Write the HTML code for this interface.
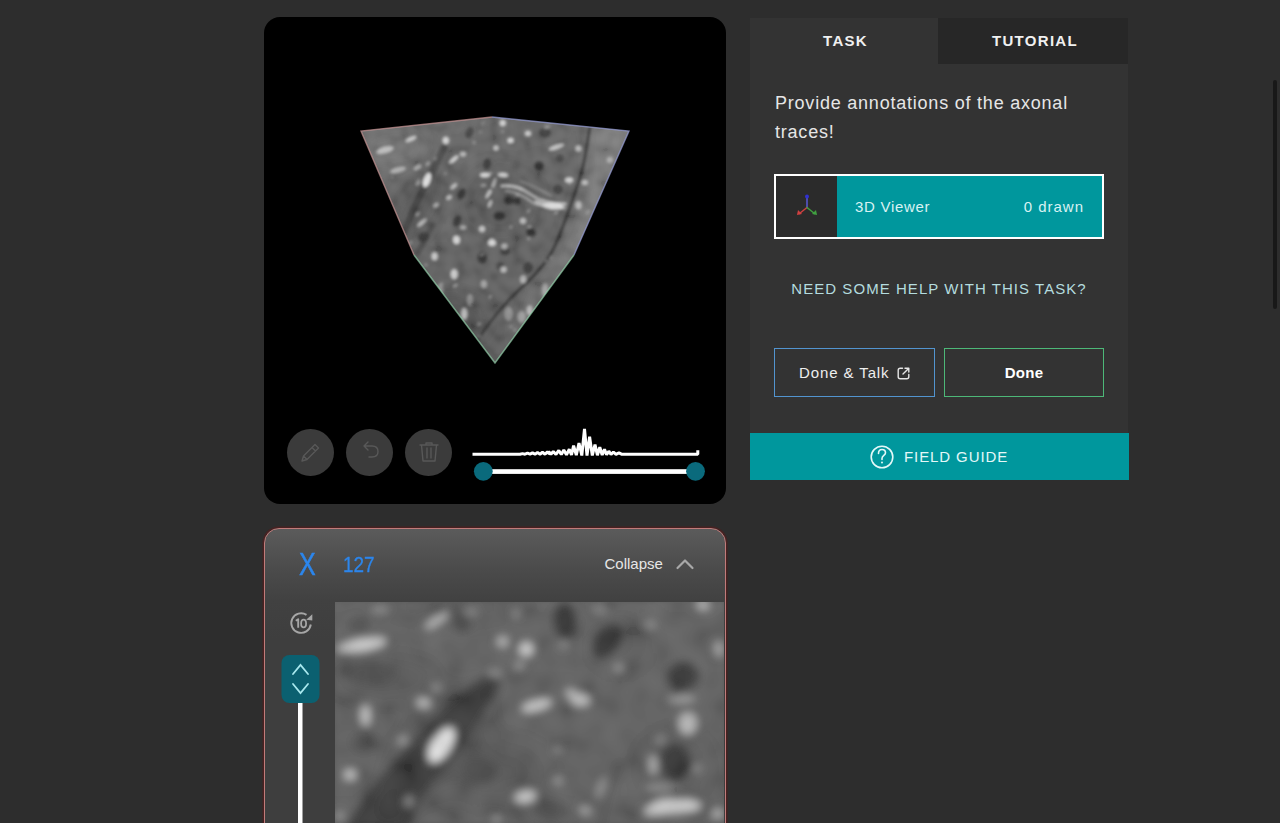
<!DOCTYPE html>
<html><head><meta charset="utf-8">
<style>
*{box-sizing:border-box;margin:0;padding:0}
html,body{width:1280px;height:823px;overflow:hidden;background:#2d2d2d;font-family:"Liberation Sans",sans-serif}
.abs{position:absolute}
#viewer{left:264px;top:17px;width:462px;height:487px;background:#000;border-radius:16px;overflow:hidden}
.tbtn{width:47px;height:47px;border-radius:50%;background:#3b3b3b;top:412px}
#panel{left:750px;top:18px;width:378px;height:415px;background:#333}
.tab{top:0;height:46px;color:#f0f0f0;font-weight:bold;font-size:15px;letter-spacing:1.3px;text-align:center;line-height:46px}
#fg{left:750px;top:433px;width:379px;height:47px;background:#00979d;color:#e4f8f8}
#slice{left:263.5px;top:527.5px;width:462.5px;height:330px;border:1.6px solid #c07c7b;box-shadow:0 0 0 1.5px rgba(75,32,32,.9);border-radius:15px;background:linear-gradient(#5b5b5b,#4b4b4b 40px,#414141 72px,#3e3e3e 110px,#3e3e3e);overflow:hidden}
svg{position:absolute;display:block}
</style></head><body>
<div id="viewer" class="abs">
  <div class="abs tbtn" style="left:23px"></div>
  <div class="abs tbtn" style="left:82px"></div>
  <div class="abs tbtn" style="left:141px"></div>
</div>
<svg style="left:264px;top:17px" width="462" height="487" viewBox="264 17 462 487">
  <defs>
    <clipPath id="cc"><polygon points="361,131 492,117 629,131 574,255 495,363 414,255"/></clipPath>
    <filter id="cb" x="-10%" y="-10%" width="120%" height="120%"><feGaussianBlur stdDeviation="1.6"/></filter>
    <filter id="cbb" x="-30%" y="-30%" width="160%" height="160%"><feGaussianBlur stdDeviation="8"/></filter>
    <filter id="cnz" x="0" y="0" width="100%" height="100%"><feTurbulence type="fractalNoise" baseFrequency="0.09" numOctaves="1" seed="3"/><feColorMatrix type="matrix" values="2 0 0 0 -0.5  2 0 0 0 -0.5  2 0 0 0 -0.5  0 0 0 0 0.1"/><feGaussianBlur stdDeviation="1"/></filter>
    <linearGradient id="cg" x1="0" y1="0" x2="0.3" y2="1">
      <stop offset="0" stop-color="#6a6a6a"/><stop offset="0.45" stop-color="#5e5e5e"/><stop offset="1" stop-color="#5a5a5a"/>
    </linearGradient>
  </defs>
  <g clip-path="url(#cc)">
   <g filter="url(#cb)">
    <rect x="340" y="100" width="310" height="280" fill="url(#cg)"/>
    <g filter="url(#cbb)">
      <polygon points="592,120 640,120 590,260 560,255 585,190" fill="#9a9a9a" fill-opacity="0.45"/>
      <path d="M525,295 L562,248 L585,250 L515,350 Z" fill="#909090" fill-opacity="0.35"/>
      <ellipse cx="420" cy="200" rx="14" ry="40" fill="#2a2a2a" fill-opacity="0.35" transform="rotate(28 420 200)"/>
      <ellipse cx="450" cy="320" rx="40" ry="25" fill="#2a2a2a" fill-opacity="0.3"/>
      <ellipse cx="500" cy="200" rx="35" ry="35" fill="#3a3a3a" fill-opacity="0.2"/>
      <ellipse cx="395" cy="150" rx="30" ry="14" fill="#a0a0a0" fill-opacity="0.25"/>
    </g>
    <ellipse cx="539.0" cy="166.0" rx="5.0" ry="5.0" fill="#222222" fill-opacity="0.90"/>
<ellipse cx="509.0" cy="200.5" rx="5.0" ry="4.5" fill="#222222" fill-opacity="0.90"/>
<ellipse cx="517.0" cy="201.0" rx="4.0" ry="4.0" fill="#222222" fill-opacity="0.80"/>
<ellipse cx="499.5" cy="216.0" rx="6.0" ry="4.5" fill="#222222" fill-opacity="0.90"/>
<ellipse cx="461.6" cy="194.0" rx="4.0" ry="6.0" fill="#222222" fill-opacity="0.80" transform="rotate(25 461.6 194.0)"/>
<ellipse cx="457.0" cy="221.0" rx="4.0" ry="6.0" fill="#222222" fill-opacity="0.75" transform="rotate(25 457.0 221.0)"/>
<ellipse cx="531.0" cy="232.0" rx="5.0" ry="4.0" fill="#222222" fill-opacity="0.75" transform="rotate(20 531.0 232.0)"/>
<ellipse cx="487.0" cy="164.0" rx="4.0" ry="6.0" fill="#222222" fill-opacity="0.70" transform="rotate(10 487.0 164.0)"/>
<ellipse cx="469.5" cy="132.6" rx="4.0" ry="6.0" fill="#222222" fill-opacity="0.60" transform="rotate(20 469.5 132.6)"/>
<ellipse cx="545.0" cy="132.6" rx="6.0" ry="5.0" fill="#222222" fill-opacity="0.60"/>
<ellipse cx="558.0" cy="189.5" rx="5.0" ry="5.0" fill="#222222" fill-opacity="0.60"/>
<ellipse cx="423.7" cy="237.0" rx="6.0" ry="5.0" fill="#222222" fill-opacity="0.70" transform="rotate(-30 423.7 237.0)"/>
<ellipse cx="482.2" cy="257.9" rx="5.0" ry="6.0" fill="#222222" fill-opacity="0.70"/>
<ellipse cx="505.2" cy="251.3" rx="5.0" ry="4.0" fill="#222222" fill-opacity="0.60"/>
<ellipse cx="528.1" cy="267.7" rx="5.0" ry="6.0" fill="#222222" fill-opacity="0.65"/>
<ellipse cx="531.4" cy="233.3" rx="5.0" ry="4.0" fill="#222222" fill-opacity="0.60"/>
<ellipse cx="500.0" cy="266.0" rx="4.0" ry="4.0" fill="#222222" fill-opacity="0.50"/>
<ellipse cx="560.0" cy="158.0" rx="4.0" ry="4.0" fill="#222222" fill-opacity="0.50"/>
    <path d="M590,126 C587,145 585,160 582,170 C578,185 572,202 566,218 C561,232 556,247 547,260 C538,272 530,280 520,289 C508,300 492,318 476,342" stroke="#222" stroke-width="3" fill="none" stroke-opacity="0.9"/>
    <path d="M444,148 C436,165 425,185 418,200 C412,212 408,222 404,232" stroke="#2a2a2a" stroke-width="7" fill="none" stroke-opacity="0.55" stroke-linecap="round"/>
    <path d="M432,225 C428,235 422,245 418,252" stroke="#2a2a2a" stroke-width="6" fill="none" stroke-opacity="0.45" stroke-linecap="round"/>
    <ellipse cx="482.2" cy="254.7" rx="2.9" ry="1.0" fill="#dddddd" fill-opacity="0.48" transform="rotate(-24 482.2 254.7)"/>
<ellipse cx="410.5" cy="242.9" rx="2.3" ry="1.2" fill="#dddddd" fill-opacity="0.39" transform="rotate(-53 410.5 242.9)"/>
<ellipse cx="546.8" cy="127.3" rx="3.0" ry="1.3" fill="#dddddd" fill-opacity="0.48" transform="rotate(-14 546.8 127.3)"/>
<ellipse cx="502.6" cy="131.6" rx="1.5" ry="0.9" fill="#dddddd" fill-opacity="0.44" transform="rotate(-58 502.6 131.6)"/>
<ellipse cx="479.1" cy="324.2" rx="2.1" ry="1.1" fill="#dddddd" fill-opacity="0.50" transform="rotate(-25 479.1 324.2)"/>
<ellipse cx="483.6" cy="185.4" rx="3.0" ry="1.3" fill="#dddddd" fill-opacity="0.51" transform="rotate(-1 483.6 185.4)"/>
<ellipse cx="445.5" cy="173.5" rx="1.7" ry="0.8" fill="#dddddd" fill-opacity="0.42" transform="rotate(-6 445.5 173.5)"/>
<ellipse cx="587.9" cy="212.1" rx="2.9" ry="1.2" fill="#dddddd" fill-opacity="0.36" transform="rotate(-60 587.9 212.1)"/>
<ellipse cx="569.6" cy="183.4" rx="1.4" ry="1.0" fill="#dddddd" fill-opacity="0.53" transform="rotate(7 569.6 183.4)"/>
<ellipse cx="392.6" cy="177.6" rx="1.4" ry="0.8" fill="#dddddd" fill-opacity="0.35" transform="rotate(-4 392.6 177.6)"/>
<ellipse cx="510.9" cy="227.1" rx="1.5" ry="1.2" fill="#dddddd" fill-opacity="0.49" transform="rotate(-51 510.9 227.1)"/>
<ellipse cx="418.0" cy="183.4" rx="2.9" ry="1.2" fill="#dddddd" fill-opacity="0.57" transform="rotate(-39 418.0 183.4)"/>
<ellipse cx="417.5" cy="214.0" rx="2.7" ry="1.1" fill="#dddddd" fill-opacity="0.60" transform="rotate(-53 417.5 214.0)"/>
<ellipse cx="418.1" cy="180.5" rx="2.6" ry="1.0" fill="#dddddd" fill-opacity="0.32" transform="rotate(-39 418.1 180.5)"/>
<ellipse cx="426.1" cy="264.9" rx="1.9" ry="1.0" fill="#dddddd" fill-opacity="0.45" transform="rotate(7 426.1 264.9)"/>
<ellipse cx="515.0" cy="330.2" rx="1.5" ry="0.9" fill="#dddddd" fill-opacity="0.55" transform="rotate(4 515.0 330.2)"/>
<ellipse cx="427.9" cy="163.7" rx="2.5" ry="1.3" fill="#dddddd" fill-opacity="0.59" transform="rotate(-46 427.9 163.7)"/>
<ellipse cx="474.0" cy="142.5" rx="1.3" ry="1.3" fill="#dddddd" fill-opacity="0.51" transform="rotate(-43 474.0 142.5)"/>
<ellipse cx="520.9" cy="189.2" rx="1.5" ry="1.2" fill="#dddddd" fill-opacity="0.37" transform="rotate(-55 520.9 189.2)"/>
<ellipse cx="510.9" cy="326.7" rx="2.3" ry="0.9" fill="#dddddd" fill-opacity="0.36" transform="rotate(4 510.9 326.7)"/>
<ellipse cx="480.4" cy="131.9" rx="1.5" ry="1.0" fill="#dddddd" fill-opacity="0.34" transform="rotate(-20 480.4 131.9)"/>
<ellipse cx="546.2" cy="260.8" rx="1.5" ry="0.8" fill="#dddddd" fill-opacity="0.57" transform="rotate(-59 546.2 260.8)"/>
<ellipse cx="490.2" cy="296.7" rx="1.8" ry="1.3" fill="#dddddd" fill-opacity="0.46" transform="rotate(-55 490.2 296.7)"/>
<ellipse cx="455.3" cy="285.5" rx="2.8" ry="1.2" fill="#dddddd" fill-opacity="0.54" transform="rotate(-31 455.3 285.5)"/>
<ellipse cx="528.5" cy="211.1" rx="2.2" ry="1.1" fill="#dddddd" fill-opacity="0.49" transform="rotate(-54 528.5 211.1)"/>
<ellipse cx="556.2" cy="212.6" rx="2.5" ry="1.1" fill="#dddddd" fill-opacity="0.55" transform="rotate(-29 556.2 212.6)"/>
<ellipse cx="489.9" cy="173.6" rx="2.5" ry="1.0" fill="#dddddd" fill-opacity="0.58" transform="rotate(-17 489.9 173.6)"/>
<ellipse cx="441.7" cy="283.8" rx="1.6" ry="0.9" fill="#dddddd" fill-opacity="0.50" transform="rotate(3 441.7 283.8)"/>
<ellipse cx="479.4" cy="336.4" rx="1.8" ry="1.1" fill="#dddddd" fill-opacity="0.43" transform="rotate(-46 479.4 336.4)"/>
<ellipse cx="517.3" cy="194.9" rx="1.4" ry="1.0" fill="#dddddd" fill-opacity="0.55" transform="rotate(-1 517.3 194.9)"/>
<ellipse cx="435.2" cy="158.6" rx="2.0" ry="0.9" fill="#dddddd" fill-opacity="0.42" transform="rotate(-45 435.2 158.6)"/>
<ellipse cx="528.7" cy="238.5" rx="1.8" ry="1.2" fill="#dddddd" fill-opacity="0.44" transform="rotate(9 528.7 238.5)"/>
<ellipse cx="550.9" cy="257.4" rx="1.8" ry="1.2" fill="#dddddd" fill-opacity="0.34" transform="rotate(-59 550.9 257.4)"/>
<ellipse cx="482.9" cy="123.1" rx="2.7" ry="0.9" fill="#dddddd" fill-opacity="0.31" transform="rotate(-50 482.9 123.1)"/>
<ellipse cx="529.6" cy="226.8" rx="2.3" ry="1.1" fill="#dddddd" fill-opacity="0.59" transform="rotate(-3 529.6 226.8)"/>
    <ellipse cx="553.0" cy="206.0" rx="11.0" ry="3.2" fill="#e6e6e6" fill-opacity="0.95" transform="rotate(5 553.0 206.0)"/>
<ellipse cx="540.0" cy="203.0" rx="6.0" ry="2.0" fill="#e6e6e6" fill-opacity="0.70" transform="rotate(20 540.0 203.0)"/>
<ellipse cx="427.0" cy="180.0" rx="3.5" ry="7.5" fill="#e6e6e6" fill-opacity="0.95" transform="rotate(20 427.0 180.0)"/>
<ellipse cx="411.0" cy="139.0" rx="6.0" ry="2.0" fill="#e6e6e6" fill-opacity="0.80" transform="rotate(-25 411.0 139.0)"/>
<ellipse cx="445.8" cy="140.5" rx="3.0" ry="3.5" fill="#e6e6e6" fill-opacity="0.85"/>
<ellipse cx="453.7" cy="159.5" rx="6.0" ry="1.8" fill="#e6e6e6" fill-opacity="0.85" transform="rotate(-40 453.7 159.5)"/>
<ellipse cx="463.0" cy="154.0" rx="3.0" ry="2.5" fill="#e6e6e6" fill-opacity="0.70"/>
<ellipse cx="510.6" cy="140.5" rx="3.0" ry="2.5" fill="#e6e6e6" fill-opacity="0.90"/>
<ellipse cx="496.0" cy="148.0" rx="2.5" ry="2.5" fill="#e6e6e6" fill-opacity="0.80"/>
<ellipse cx="528.0" cy="133.4" rx="3.0" ry="2.5" fill="#e6e6e6" fill-opacity="0.80"/>
<ellipse cx="502.7" cy="123.0" rx="3.0" ry="3.0" fill="#e6e6e6" fill-opacity="0.85"/>
<ellipse cx="556.4" cy="147.0" rx="8.0" ry="2.0" fill="#e6e6e6" fill-opacity="0.80" transform="rotate(-20 556.4 147.0)"/>
<ellipse cx="578.5" cy="148.4" rx="3.0" ry="3.0" fill="#e6e6e6" fill-opacity="0.70"/>
<ellipse cx="569.0" cy="180.0" rx="4.0" ry="2.5" fill="#e6e6e6" fill-opacity="0.85"/>
<ellipse cx="584.8" cy="182.4" rx="3.0" ry="2.5" fill="#e6e6e6" fill-opacity="0.70"/>
<ellipse cx="578.5" cy="205.3" rx="3.0" ry="4.0" fill="#e6e6e6" fill-opacity="0.60"/>
<ellipse cx="449.0" cy="197.4" rx="3.0" ry="2.0" fill="#e6e6e6" fill-opacity="0.70" transform="rotate(-30 449.0 197.4)"/>
<ellipse cx="436.0" cy="205.3" rx="3.0" ry="2.0" fill="#e6e6e6" fill-opacity="0.60" transform="rotate(-30 436.0 205.3)"/>
<ellipse cx="417.4" cy="167.4" rx="4.0" ry="2.0" fill="#e6e6e6" fill-opacity="0.60" transform="rotate(-30 417.4 167.4)"/>
<ellipse cx="453.7" cy="186.4" rx="4.0" ry="1.8" fill="#e6e6e6" fill-opacity="0.70" transform="rotate(-40 453.7 186.4)"/>
<ellipse cx="488.5" cy="194.0" rx="5.0" ry="1.5" fill="#e6e6e6" fill-opacity="0.80" transform="rotate(-60 488.5 194.0)"/>
<ellipse cx="490.0" cy="203.7" rx="4.0" ry="1.5" fill="#e6e6e6" fill-opacity="0.70" transform="rotate(-70 490.0 203.7)"/>
<ellipse cx="523.0" cy="221.0" rx="3.0" ry="3.0" fill="#e6e6e6" fill-opacity="0.70"/>
<ellipse cx="482.0" cy="229.0" rx="3.0" ry="3.0" fill="#e6e6e6" fill-opacity="0.75"/>
<ellipse cx="457.0" cy="240.0" rx="3.0" ry="4.0" fill="#e6e6e6" fill-opacity="0.75"/>
<ellipse cx="491.6" cy="241.6" rx="3.0" ry="3.0" fill="#e6e6e6" fill-opacity="0.70"/>
<ellipse cx="422.0" cy="222.7" rx="6.0" ry="1.8" fill="#e6e6e6" fill-opacity="0.70" transform="rotate(-40 422.0 222.7)"/>
<ellipse cx="463.0" cy="227.4" rx="3.0" ry="2.0" fill="#e6e6e6" fill-opacity="0.60"/>
<ellipse cx="485.0" cy="175.0" rx="5.0" ry="2.0" fill="#e6e6e6" fill-opacity="0.90"/>
<ellipse cx="503.0" cy="175.0" rx="5.0" ry="2.0" fill="#e6e6e6" fill-opacity="0.85" transform="rotate(5 503.0 175.0)"/>
<ellipse cx="494.0" cy="183.0" rx="5.0" ry="1.2" fill="#e6e6e6" fill-opacity="0.70" transform="rotate(-70 494.0 183.0)"/>
<ellipse cx="398.0" cy="170.0" rx="8.0" ry="2.5" fill="#e6e6e6" fill-opacity="0.60" transform="rotate(-15 398.0 170.0)"/>
<ellipse cx="385.0" cy="150.0" rx="9.0" ry="3.0" fill="#e6e6e6" fill-opacity="0.75" transform="rotate(-15 385.0 150.0)"/>
<ellipse cx="456.0" cy="239.8" rx="3.0" ry="4.0" fill="#e6e6e6" fill-opacity="0.80"/>
<ellipse cx="492.0" cy="243.1" rx="4.0" ry="3.0" fill="#e6e6e6" fill-opacity="0.80"/>
<ellipse cx="504.4" cy="246.4" rx="3.0" ry="3.0" fill="#e6e6e6" fill-opacity="0.60"/>
<ellipse cx="434.6" cy="256.3" rx="3.0" ry="4.0" fill="#e6e6e6" fill-opacity="0.80"/>
<ellipse cx="454.3" cy="274.3" rx="3.5" ry="5.0" fill="#e6e6e6" fill-opacity="0.80"/>
<ellipse cx="503.5" cy="269.4" rx="3.0" ry="3.0" fill="#e6e6e6" fill-opacity="0.70"/>
<ellipse cx="483.8" cy="284.2" rx="3.0" ry="4.0" fill="#e6e6e6" fill-opacity="0.50"/>
<ellipse cx="464.2" cy="313.7" rx="3.0" ry="6.0" fill="#e6e6e6" fill-opacity="0.70"/>
<ellipse cx="523.2" cy="279.2" rx="3.0" ry="4.0" fill="#e6e6e6" fill-opacity="0.60"/>
<ellipse cx="508.5" cy="313.7" rx="4.0" ry="7.0" fill="#e6e6e6" fill-opacity="0.40"/>
<ellipse cx="521.6" cy="317.0" rx="4.0" ry="6.0" fill="#e6e6e6" fill-opacity="0.40"/>
<ellipse cx="529.8" cy="310.4" rx="3.0" ry="5.0" fill="#e6e6e6" fill-opacity="0.60"/>
<ellipse cx="470.0" cy="300.0" rx="3.0" ry="6.0" fill="#e6e6e6" fill-opacity="0.40"/>
<ellipse cx="545.0" cy="290.0" rx="3.0" ry="7.0" fill="#e6e6e6" fill-opacity="0.45"/>
<ellipse cx="440.0" cy="290.0" rx="3.0" ry="6.0" fill="#e6e6e6" fill-opacity="0.40"/>
<ellipse cx="600.0" cy="230.0" rx="3.0" ry="5.0" fill="#e6e6e6" fill-opacity="0.50"/>
<ellipse cx="610.0" cy="160.0" rx="3.0" ry="3.0" fill="#e6e6e6" fill-opacity="0.50"/>
    <path d="M501,186 C512,185 522,188 530,194 C538,200 548,204 566,204" stroke="#e8e8e8" stroke-width="2" fill="none" stroke-opacity="0.8"/>
    <path d="M505,191 C515,191 524,196 532,202 C540,207 552,208 566,208" stroke="#dddddd" stroke-width="1.6" fill="none" stroke-opacity="0.6"/>
    <path d="M520,181 C530,184 540,190 552,196" stroke="#d0d0d0" stroke-width="1.2" fill="none" stroke-opacity="0.5"/>
   </g>
    <rect x="350" y="110" width="290" height="260" filter="url(#cnz)"/>
  </g>
  <polyline points="414,255 361,131 492,117" fill="none" stroke="#c99595" stroke-width="1.4" stroke-opacity="0.7"/>
  <polyline points="492,117 629,131 574,255" fill="none" stroke="#98a0d8" stroke-width="1.4" stroke-opacity="0.7"/>
  <polyline points="414,255 495,363 574,255" fill="none" stroke="#98d8b0" stroke-width="1.5" stroke-opacity="0.65"/>
  <g stroke="#585858" stroke-width="1.4" fill="none" stroke-linejoin="round" stroke-linecap="round">
    <path d="M302,461 L303.5,456 L315,444.5 L318.5,448 L307,459.5 Z M312,447.5 L315.5,451 M303.5,456 L307,459.5"/>
    <path d="M364,446 L368,442 M364,446 L368,450 M364.5,446 L372,446 C376,446 378,448.5 378,451.5 C378,454.5 376,457 372,457 L369,457"/>
    <path d="M420,445 L438,445 M426,445 L426,443 L432,443 L432,445 M421.5,445 L423,461 L435,461 L436.5,445 M427,448 L427,458 M431,448 L431,458"/>
  </g>
  <polyline points="472.5,454.2 520.0,454.2 522.5,453.6 525.0,454.2 527.5,453.2 530.0,454.2 532.5,452.9 535.0,454.2 537.5,452.6 540.0,454.2 542.5,452.3 545.0,454.2 547.5,452.0 550.0,454.2 548.6,451.5 550.9,454.3 553.3,451.5 556.0,454.4 558.8,450.4 561.3,454.6 563.8,450.0 566.5,454.8 569.3,449.2 571.5,455.0 573.6,445.7 576.3,455.2 579.0,443.0 581.8,455.5 584.5,429.0 587.0,455.6 589.6,436.7 592.3,455.5 595.0,444.5 597.4,455.2 599.8,447.3 602.2,455.0 604.5,449.2 606.6,454.8 608.8,451.2 611.0,454.5 613.4,452.0 616.0,454.4 619.0,452.8 622.0,454.3 640.0,454.2 697.8,454.2 697.8,450.2" fill="none" stroke="#fff" stroke-width="3" stroke-linejoin="bevel" stroke-linecap="butt"/>
  <rect x="483" y="469.2" width="212" height="4.7" fill="#fff"/>
  <circle cx="483.3" cy="471.3" r="9.4" fill="#0a6a7c"/>
  <circle cx="695.5" cy="471.3" r="9.4" fill="#0a6a7c"/>
</svg>

<div id="panel" class="abs">
  <div class="abs tab" style="left:0;width:188px;background:#333;padding-left:3px">TASK</div>
  <div class="abs tab" style="left:188px;width:190px;background:#272727;padding-left:4px">TUTORIAL</div>
  <div class="abs" style="left:25px;top:71px;width:345px;font-size:18px;letter-spacing:0.78px;line-height:28.5px;color:#e6e6e6">Provide annotations of the axonal traces!</div>
  <div class="abs" style="left:24px;top:156px;width:330px;height:65px;border:2px solid #fff;background:#00979d">
    <div class="abs" style="left:0;top:0;width:61px;height:61px;background:#2b2b2b"></div>
    <div class="abs" style="left:79px;top:0;line-height:61px;font-size:15px;letter-spacing:0.7px;color:#d8f2f3">3D Viewer</div>
    <div class="abs" style="right:18px;top:0;line-height:61px;font-size:15px;letter-spacing:1px;color:#d8f2f3">0 drawn</div>
  </div>
  <div class="abs" style="left:0;top:262px;width:378px;text-align:center;font-size:15px;letter-spacing:1.05px;color:#b4dcdf">NEED SOME HELP WITH THIS TASK?</div>
  <div class="abs" style="left:24px;top:330px;width:161px;height:49px;border:1.8px solid #5294cf;color:#eee;font-size:15px;letter-spacing:0.9px;line-height:48px;padding-left:24px">Done &amp; Talk</div>
  <div class="abs" style="left:194px;top:330px;width:160px;height:49px;border:1.8px solid #4db878;color:#fff;font-weight:bold;font-size:15px;letter-spacing:0.3px;line-height:47px;text-align:center">Done</div>
</div>
<div id="fg" class="abs">
  <div class="abs" style="left:154px;top:0;line-height:47px;font-size:15px;letter-spacing:0.9px">FIELD GUIDE</div>
</div>
<svg style="left:750px;top:433px" width="379" height="47" viewBox="750 433 379 47">
  <circle cx="882" cy="457" r="10.8" fill="none" stroke="#e4f8f8" stroke-width="1.6"/>
  <path d="M878.5,453.5 C878.5,450.5 880,449.5 882,449.5 C884,449.5 885.5,450.8 885.5,452.8 C885.5,455.5 882,455.5 882,458.5 L882,459.5" fill="none" stroke="#e4f8f8" stroke-width="1.6" stroke-linecap="round"/>
  <circle cx="882" cy="462.5" r="1" fill="#e4f8f8"/>
</svg>
<svg style="left:750px;top:160px" width="378" height="230" viewBox="750 160 378 230">
  <g fill="none" stroke-linecap="round" stroke-width="1.5">
    <line x1="807" y1="207.5" x2="807" y2="197" stroke="#5a5ad8"/>
    <line x1="807" y1="207.5" x2="799.5" y2="213.5" stroke="#d04040"/>
    <line x1="807" y1="207.5" x2="814.5" y2="213.5" stroke="#40a040"/>
  </g>
  <circle cx="807" cy="196.5" r="2" fill="#3030d0"/>
  <path d="M797,215 L798,210 L802,214 Z" fill="#d04040"/>
  <path d="M817,215 L816,210 L812,214 Z" fill="#40a040"/>
  <g fill="none" stroke="#e6e6e6" stroke-width="1.4" stroke-linecap="round" stroke-linejoin="round">
    <path d="M902.5,368.2 L900.2,368.2 Q898.2,368.2 898.2,370.2 L898.2,376.8 Q898.2,378.8 900.2,378.8 L906.8,378.8 Q908.8,378.8 908.8,376.8 L908.8,374.5"/>
    <path d="M903,374 L908.8,368.2 M905,368.2 L908.8,368.2 L908.8,372"/>
  </g>
</svg>

<div id="slice" class="abs">
  <div class="abs" style="left:34px;top:18px;font-size:30.5px;color:#2c86ec;-webkit-text-stroke:0.5px #2c86ec;transform:scaleX(0.82);transform-origin:0 0">X</div>
  <div class="abs" style="left:78px;top:23px;font-size:22px;color:#2c86ec;-webkit-text-stroke:0.3px #2c86ec;transform:scaleX(0.86);transform-origin:0 0">127</div>
  <div class="abs" style="left:340px;top:26.5px;font-size:15px;color:#e6e6e6">Collapse</div>
</div>
<svg style="left:265px;top:529px" width="459" height="294" viewBox="265 529 459 294">
  <defs>
    <filter id="sb" x="-5%" y="-5%" width="110%" height="110%"><feGaussianBlur stdDeviation="4.2"/></filter>
    <filter id="sbb" x="-20%" y="-20%" width="140%" height="140%"><feGaussianBlur stdDeviation="12"/></filter>
    <filter id="nz" x="0" y="0" width="100%" height="100%"><feTurbulence type="fractalNoise" baseFrequency="0.045" numOctaves="1" seed="7"/><feColorMatrix type="matrix" values="2 0 0 0 -0.5  2 0 0 0 -0.5  2 0 0 0 -0.5  0 0 0 0 0.09"/><feGaussianBlur stdDeviation="2"/></filter>
    <clipPath id="sc"><rect x="335" y="602" width="389" height="221"/></clipPath>
    <linearGradient id="sg" x1="0" y1="0" x2="0" y2="1">
      <stop offset="0" stop-color="#5e5e5e"/><stop offset="1" stop-color="#5a5a5a"/>
    </linearGradient>
  </defs>
  <path d="M677.5,568 L685,560.5 L692.5,568" fill="none" stroke="#a8a8a8" stroke-width="2.2" stroke-linecap="round" stroke-linejoin="round"/>
  <path d="M310.8,624.5 A9.8,9.8 0 1 1 306.5,614.9" fill="none" stroke="#a6a6a6" stroke-width="1.9"/>
  <path d="M306.2,619.8 L312.3,614.3 L312.3,620.6 Z" fill="#a6a6a6"/>
  <path d="M298.2,627.8 L298.2,619.2 L295.8,620.8" fill="none" stroke="#a6a6a6" stroke-width="1.9" stroke-linejoin="round"/>
  <ellipse cx="303.6" cy="623.5" rx="2.5" ry="3.9" fill="none" stroke="#a6a6a6" stroke-width="1.8"/>
  <rect x="281.5" y="655" width="38" height="48" rx="8" fill="#0b6070"/>
  <path d="M293,674 L300.5,665 L308,674 M293,684 L300.5,693 L308,684" fill="none" stroke="#a8e8ee" stroke-width="1.8" stroke-linecap="round"/>
  <rect x="298" y="703" width="4.5" height="130" fill="#fff"/>
  <g clip-path="url(#sc)">
   <g filter="url(#sb)">
    <rect x="320" y="590" width="420" height="250" fill="url(#sg)"/>
    <g filter="url(#sbb)">
      <ellipse cx="385" cy="678" rx="50" ry="16" fill="#333" fill-opacity="0.3"/>
      <ellipse cx="500" cy="772" rx="45" ry="28" fill="#333" fill-opacity="0.25"/>
      <ellipse cx="620" cy="640" rx="30" ry="30" fill="#333" fill-opacity="0.2"/>
      <ellipse cx="450" cy="606" rx="70" ry="8" fill="#333" fill-opacity="0.3"/>
      <ellipse cx="440" cy="745" rx="30" ry="60" fill="#2a2a2a" fill-opacity="0.35" transform="rotate(38 440 745)"/>
      <ellipse cx="675" cy="765" rx="30" ry="30" fill="#333" fill-opacity="0.25"/>
    </g>
    <ellipse cx="565.0" cy="621.0" rx="12.0" ry="18.0" fill="#2e2e2e" fill-opacity="0.95"/>
<ellipse cx="607.0" cy="641.0" rx="13.0" ry="20.0" fill="#2e2e2e" fill-opacity="0.95" transform="rotate(35 607.0 641.0)"/>
<ellipse cx="683.0" cy="676.0" rx="17.0" ry="14.0" fill="#2e2e2e" fill-opacity="0.85"/>
<ellipse cx="675.0" cy="762.0" rx="15.0" ry="19.0" fill="#2e2e2e" fill-opacity="0.95"/>
<ellipse cx="462.5" cy="621.8" rx="9.0" ry="11.0" fill="#2e2e2e" fill-opacity="0.45"/>
<ellipse cx="358.5" cy="624.5" rx="12.0" ry="8.0" fill="#2e2e2e" fill-opacity="0.30"/>
<ellipse cx="368.0" cy="672.0" rx="28.0" ry="11.0" fill="#2e2e2e" fill-opacity="0.30"/>
<ellipse cx="364.0" cy="742.0" rx="12.0" ry="10.0" fill="#2e2e2e" fill-opacity="0.30"/>
<ellipse cx="480.0" cy="771.0" rx="18.0" ry="14.0" fill="#2e2e2e" fill-opacity="0.35"/>
<ellipse cx="551.0" cy="811.0" rx="18.0" ry="10.0" fill="#2e2e2e" fill-opacity="0.35"/>
<ellipse cx="490.0" cy="690.0" rx="9.0" ry="14.0" fill="#2e2e2e" fill-opacity="0.60" transform="rotate(35 490.0 690.0)"/>
<ellipse cx="392.0" cy="805.0" rx="14.0" ry="18.0" fill="#2e2e2e" fill-opacity="0.60" transform="rotate(35 392.0 805.0)"/>
    <path d="M500,680 C494,700 482,718 470,735 C455,755 440,772 428,790 C418,805 412,818 408,830 L345,830 C352,815 362,800 375,783 C392,762 412,742 430,722 C448,702 468,686 486,674 Z" fill="#2e2e2e" fill-opacity="0.8"/>
    <path d="M620,762 C614,780 606,800 600,830" stroke="#4a4a4a" stroke-width="5" fill="none" stroke-opacity="0.6"/>
    <ellipse cx="362.0" cy="645.0" rx="25.0" ry="6.0" fill="#d6d6d6" fill-opacity="0.90" transform="rotate(-10 362.0 645.0)"/>
<ellipse cx="437.0" cy="620.0" rx="14.0" ry="4.0" fill="#d6d6d6" fill-opacity="0.75" transform="rotate(-35 437.0 620.0)"/>
<ellipse cx="423.4" cy="703.0" rx="7.0" ry="5.0" fill="#d6d6d6" fill-opacity="0.75"/>
<ellipse cx="365.4" cy="716.0" rx="4.5" ry="11.0" fill="#d6d6d6" fill-opacity="0.80"/>
<ellipse cx="402.7" cy="740.3" rx="5.0" ry="5.0" fill="#d6d6d6" fill-opacity="0.45"/>
<ellipse cx="350.4" cy="774.7" rx="6.0" ry="5.0" fill="#d6d6d6" fill-opacity="0.85"/>
<ellipse cx="408.7" cy="801.6" rx="5.0" ry="6.0" fill="#d6d6d6" fill-opacity="0.45"/>
<ellipse cx="340.0" cy="816.5" rx="4.0" ry="4.0" fill="#d6d6d6" fill-opacity="0.50"/>
<ellipse cx="502.5" cy="641.8" rx="6.0" ry="5.0" fill="#d6d6d6" fill-opacity="0.70"/>
<ellipse cx="526.2" cy="649.2" rx="7.0" ry="7.0" fill="#d6d6d6" fill-opacity="0.90"/>
<ellipse cx="516.0" cy="614.0" rx="4.0" ry="4.0" fill="#d6d6d6" fill-opacity="0.40"/>
<ellipse cx="520.0" cy="665.5" rx="6.0" ry="4.0" fill="#d6d6d6" fill-opacity="0.45" transform="rotate(-40 520.0 665.5)"/>
<ellipse cx="495.0" cy="673.0" rx="8.0" ry="3.0" fill="#d6d6d6" fill-opacity="0.35"/>
<ellipse cx="563.8" cy="644.2" rx="4.0" ry="4.0" fill="#d6d6d6" fill-opacity="0.35"/>
<ellipse cx="436.0" cy="688.0" rx="5.0" ry="4.0" fill="#d6d6d6" fill-opacity="0.40"/>
<ellipse cx="571.0" cy="693.0" rx="5.0" ry="4.0" fill="#d6d6d6" fill-opacity="0.40"/>
<ellipse cx="536.7" cy="705.4" rx="15.0" ry="5.0" fill="#d6d6d6" fill-opacity="0.90" transform="rotate(-15 536.7 705.4)"/>
<ellipse cx="580.4" cy="699.7" rx="10.0" ry="6.0" fill="#d6d6d6" fill-opacity="0.80"/>
<ellipse cx="570.7" cy="693.2" rx="5.0" ry="4.0" fill="#d6d6d6" fill-opacity="0.50"/>
<ellipse cx="557.8" cy="749.8" rx="4.0" ry="3.0" fill="#d6d6d6" fill-opacity="0.45"/>
<ellipse cx="557.8" cy="780.5" rx="5.0" ry="4.0" fill="#d6d6d6" fill-opacity="0.45"/>
<ellipse cx="525.4" cy="796.7" rx="11.0" ry="6.0" fill="#d6d6d6" fill-opacity="0.85" transform="rotate(-10 525.4 796.7)"/>
<ellipse cx="585.2" cy="810.4" rx="6.0" ry="4.0" fill="#d6d6d6" fill-opacity="0.60"/>
<ellipse cx="496.3" cy="819.0" rx="4.0" ry="4.0" fill="#d6d6d6" fill-opacity="0.50"/>
<ellipse cx="619.0" cy="668.0" rx="4.0" ry="4.0" fill="#d6d6d6" fill-opacity="0.50"/>
<ellipse cx="703.0" cy="605.0" rx="6.0" ry="5.0" fill="#d6d6d6" fill-opacity="0.75"/>
<ellipse cx="719.0" cy="649.0" rx="4.0" ry="8.0" fill="#d6d6d6" fill-opacity="0.60"/>
<ellipse cx="653.0" cy="765.0" rx="4.0" ry="10.0" fill="#d6d6d6" fill-opacity="0.70"/>
<ellipse cx="687.8" cy="723.4" rx="9.0" ry="11.0" fill="#d6d6d6" fill-opacity="0.75"/>
<ellipse cx="680.8" cy="699.0" rx="14.0" ry="4.0" fill="#d6d6d6" fill-opacity="0.50"/>
<ellipse cx="696.5" cy="768.6" rx="4.0" ry="4.0" fill="#d6d6d6" fill-opacity="0.40"/>
<ellipse cx="717.3" cy="813.7" rx="6.0" ry="5.0" fill="#d6d6d6" fill-opacity="0.70"/>
<ellipse cx="663.5" cy="787.7" rx="18.0" ry="5.0" fill="#d6d6d6" fill-opacity="0.35"/>
<ellipse cx="601.0" cy="787.7" rx="3.0" ry="12.0" fill="#d6d6d6" fill-opacity="0.40" transform="rotate(20 601.0 787.7)"/>
<ellipse cx="380.0" cy="610.0" rx="10.0" ry="4.0" fill="#d6d6d6" fill-opacity="0.35"/>
<ellipse cx="470.0" cy="612.0" rx="8.0" ry="4.0" fill="#d6d6d6" fill-opacity="0.30"/>
<ellipse cx="600.0" cy="610.0" rx="8.0" ry="4.0" fill="#d6d6d6" fill-opacity="0.35"/>
<ellipse cx="650.0" cy="625.0" rx="6.0" ry="4.0" fill="#d6d6d6" fill-opacity="0.35"/>
<ellipse cx="660.0" cy="740.0" rx="5.0" ry="5.0" fill="#d6d6d6" fill-opacity="0.30"/>
    <ellipse cx="441.5" cy="745" rx="19.5" ry="9.5" fill="#e2e2e2" transform="rotate(-57 441.5 745)"/>
    <path d="M643,813 C650,802 660,799 672,799 C688,799 698,800 702,806 C698,811 690,811 670,813 C660,815 650,816 643,813 Z" fill="#cacaca"/>
   </g>
    <rect x="335" y="602" width="389" height="221" filter="url(#nz)"/>
  </g>
</svg>
<div class="abs" style="left:1273px;top:80px;width:4px;height:229px;border-radius:2px;background:#181818"></div>
</body></html>
